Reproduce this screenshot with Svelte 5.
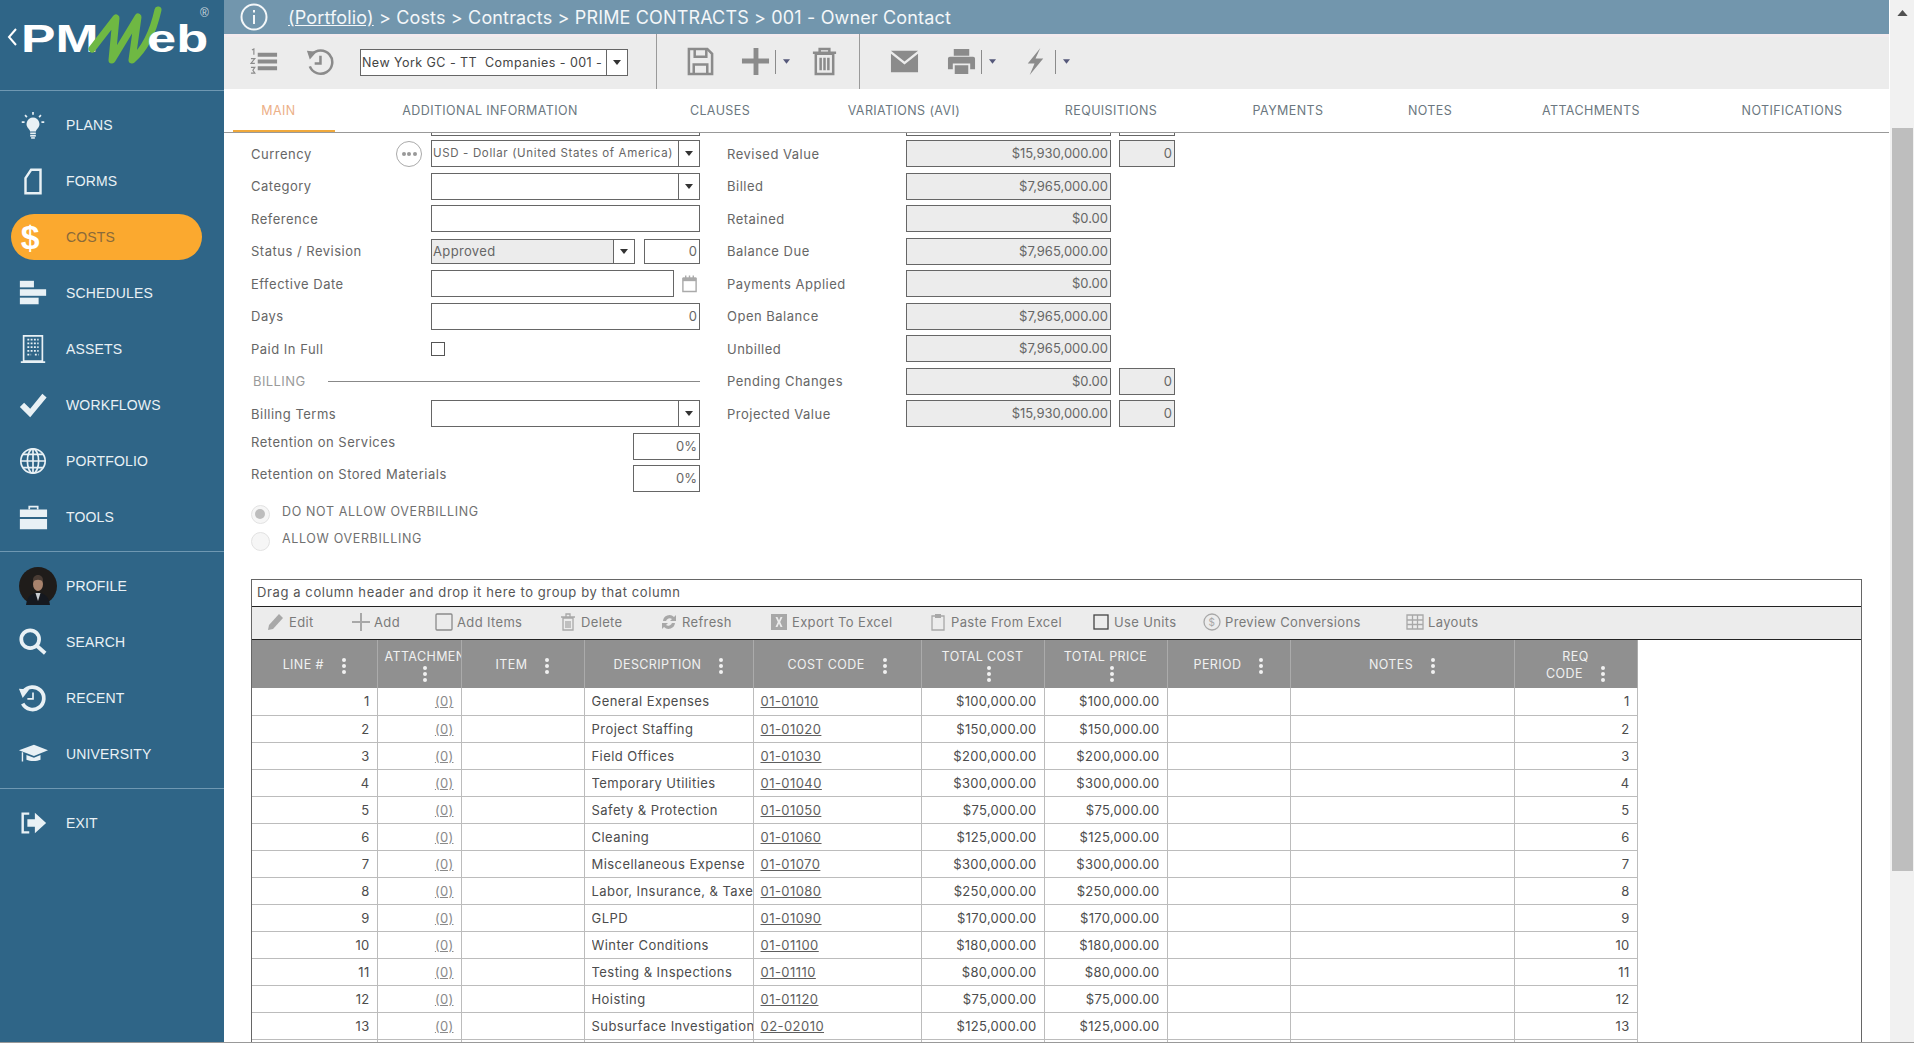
<script>
    const navTop = ['plans', 'forms', 'costs', 'schedules', 'assets', 'workflows', 'portfolio', 'tools'];
    const navMid = ['profile', 'search', 'recent', 'university'];

    // widths keep the uneven tab spacing of the real page
    const tabs = [
        { label: 'MAIN', w: 102 },
        { label: 'ADDITIONAL INFORMATION', w: 310 },
        { label: 'CLAUSES', w: 150 },
        { label: 'VARIATIONS (AVI)', w: 218 },
        { label: 'REQUISITIONS', w: 196 },
        { label: 'PAYMENTS', w: 158 },
        { label: 'NOTES', w: 126 },
        { label: 'ATTACHMENTS', w: 196 },
        { label: 'NOTIFICATIONS', w: 206 },
    ];

    const rightRows = [
        { label: 'Revised Value', value: '$15,930,000.00', extra: '0' },
        { label: 'Billed', value: '$7,965,000.00' },
        { label: 'Retained', value: '$0.00' },
        { label: 'Balance Due', value: '$7,965,000.00' },
        { label: 'Payments Applied', value: '$0.00' },
        { label: 'Open Balance', value: '$7,965,000.00' },
        { label: 'Unbilled', value: '$7,965,000.00' },
        { label: 'Pending Changes', value: '$0.00', extra: '0' },
        { label: 'Projected Value', value: '$15,930,000.00', extra: '0' },
    ];

    const gridTools = [
        { icon: 'edit', label: 'Edit', w: 85 },
        { icon: 'add', label: 'Add', w: 83 },
        { icon: 'box', label: 'Add Items', w: 124 },
        { icon: 'trash', label: 'Delete', w: 101 },
        { icon: 'refresh', label: 'Refresh', w: 110 },
        { icon: 'excel', label: 'Export To Excel', w: 159 },
        { icon: 'paste', label: 'Paste From Excel', w: 163 },
        { icon: 'unit', label: 'Use Units', w: 111 },
        { icon: 'coin', label: 'Preview Conversions', w: 203 },
        { icon: 'layouts', label: 'Layouts', w: 90 },
    ];

    const columns = [
        { label: 'LINE #', w: 125 },
        { label: 'ATTACHMENTS', w: 84, stack: true },
        { label: 'ITEM', w: 123 },
        { label: 'DESCRIPTION', w: 169 },
        { label: 'COST CODE', w: 168 },
        { label: 'TOTAL COST', w: 123, stack: true },
        { label: 'TOTAL PRICE', w: 123, stack: true },
        { label: 'PERIOD', w: 123 },
        { label: 'NOTES', w: 224 },
        { label: 'REQ CODE', w: 123, two: true },
    ];

    const lines = [
        ['General Expenses', '01-01010', '$100,000.00'],
        ['Project Staffing', '01-01020', '$150,000.00'],
        ['Field Offices', '01-01030', '$200,000.00'],
        ['Temporary Utilities', '01-01040', '$300,000.00'],
        ['Safety & Protection', '01-01050', '$75,000.00'],
        ['Cleaning', '01-01060', '$125,000.00'],
        ['Miscellaneous Expense', '01-01070', '$300,000.00'],
        ['Labor, Insurance, & Taxes', '01-01080', '$250,000.00'],
        ['GLPD', '01-01090', '$170,000.00'],
        ['Winter Conditions', '01-01100', '$180,000.00'],
        ['Testing & Inspections', '01-01110', '$80,000.00'],
        ['Hoisting', '01-01120', '$75,000.00'],
        ['Subsurface Investigations', '02-02010', '$125,000.00'],
    ];
</script>

{#snippet navIcon(name)}
    <svg class="nav-ico" viewBox="0 0 32 32">
        {#if name === 'plans'}
            <path d="M16 8a7 7 0 0 1 4.500 12.200c-1 1-1.300 1.800-1.400 2.800h-6.200c-.1-1-.4-1.800-1.400-2.800A7 7 0 0 1 16 8z" />
            <rect x="13" y="24" width="6" height="1.800" /><rect x="13" y="26.600" width="6" height="1.800" /><rect x="14" y="29" width="4" height="1.600" />
            <path class="line" d="M16 2v3M7.500 5.500l2 2M24.500 5.500l-2 2M4 13h3M25 13h3" />
        {:else if name === 'forms'}
            <path class="line thick" d="M8 13l6-9h10v25H8z" />
        {:else if name === 'costs'}
            <text class="dollar" x="13" y="29">$</text>
        {:else if name === 'schedules'}
            <rect x="2" y="3" width="15" height="7" /><rect x="2" y="12" width="28" height="7" /><rect x="2" y="21" width="20" height="7" />
        {:else if name === 'assets'}
            <path class="line" d="M6 2h20v27H6zM3 30h26" />
            <path class="dots" d="M10 6h12M10 10h12M10 14h12M10 18h12M10 22h4M18 22h4" />
        {:else if name === 'workflows'}
            <path d="M2 18l4.500-4.500L13 20 26 4l4.500 4L13 29z" />
        {:else if name === 'portfolio'}
            <circle class="line" cx="16" cy="16" r="13" />
            <ellipse class="line" cx="16" cy="16" rx="6" ry="13" />
            <path class="line" d="M16 3v26M3 16h26M5 9h22M5 23h22" />
        {:else if name === 'tools'}
            <path class="line" d="M12 8V5h9v3" />
            <path d="M2 8h29v8H2zM2 18h29v11H2z" />
        {:else if name === 'search'}
            <circle class="line heavy" cx="13" cy="13" r="9.500" />
            <path class="line heavy" d="M20 20l9 8" />
        {:else if name === 'recent'}
            <path class="line heavy" d="M6 9a12 12 0 1 1-1 13" />
            <path d="M1 6l11 1-7 9z" />
            <path class="line" d="M16 10v7h-6" />
        {:else if name === 'university'}
            <path d="M1 12l16-6 15 6-15 6z" />
            <path d="M9 17l8 3 7-3v5c-4 2-11 2-15 0zM4 14h1.500v10h-1.500z" />
        {:else if name === 'exit'}
            <path class="line thick" d="M12 6H5v20h7" />
            <path d="M10 12h8V5l12 11-12 11v-7h-8z" />
        {/if}
    </svg>
{/snippet}

{#snippet arrow()}
    <svg class="arrow" viewBox="0 0 8 5"><path d="M0 0h8L4 5z" /></svg>
{/snippet}

{#snippet combo(text, cls = '')}
    <div class="combo {cls}">
        <span class="combo-text">{text}</span>
        <span class="combo-btn">{@render arrow()}</span>
    </div>
{/snippet}

{#snippet barIcon(name)}
    <svg class="bar-ico" viewBox="0 0 30 30">
        {#if name === 'list'}
            <path d="M8 6h20v4H8zM8 13h20v4H8zM8 20h20v4H8z" />
            <path class="thin" d="M2 3l2-1v6M1 12h4l-4 5h4M1 21h4l-2 3 2 3H1" />
        {:else if name === 'history'}
            <path class="stroke" d="M7 8a12 12 0 1 1-2 12" />
            <path d="M2 4l10 1-7 8z" />
            <path class="stroke" d="M16 9v8h-6" />
        {:else if name === 'save'}
            <path class="stroke" d="M3 2h19l5 5v21H3z" />
            <path class="stroke" d="M9 2v8h12V2M8 28V18h14v10" />
        {:else if name === 'plus'}
            <path d="M13 1h5v11h11v5H18v12h-5V17H1v-5h12z" />
        {:else if name === 'trash'}
            <path class="stroke" d="M6 7h18v21H6zM3 6h24M10 6V2h10v4M11 11v13M15 11v13M19 11v13" />
        {:else if name === 'mail'}
            <path d="M1 4h28L15 15zM1 7l14 11L29 7v19H1z" />
        {:else if name === 'print'}
            <path d="M7 2h16v7H7zM3 10h24a2 2 0 0 1 2 2v11h-5v-6H6v6H1V12a2 2 0 0 1 2-2zM8 19h14v9H8z" />
        {:else if name === 'bolt'}
            <path d="M20 1L7 17h7l-5 12 14-17h-8z" />
        {/if}
    </svg>
{/snippet}

{#snippet toolIcon(name)}
    <svg class="tool-ico" viewBox="0 0 18 18">
        {#if name === 'edit'}
            <path d="M1 17l1-5L12 1l4 4L6 16z" />
        {:else if name === 'add'}
            <path d="M8 0h2v8h8v2h-8v8H8v-8H0V8h8z" />
        {:else if name === 'box'}
            <rect class="stroke box" x="1" y="1" width="16" height="16" rx="1" />
        {:else if name === 'unit'}
            <rect class="stroke unit" x="2" y="2" width="14" height="14" />
        {:else if name === 'trash'}
            <path class="stroke" d="M4 5h10v12H4zM2 4h14M7 4V1h4v3M7 8v7M9 8v7M11 8v7" />
        {:else if name === 'refresh'}
            <path d="M3 8a6.500 6.500 0 0 1 11-4l2-2v6h-6l2-2a4 4 0 0 0-6 2zM15 10a6.500 6.500 0 0 1-11 4l-2 2v-6h6l-2 2a4 4 0 0 0 6-2z" />
        {:else if name === 'excel'}
            <path d="M1 1h16v16H1zM5.500 4l2.300 5-2.300 5h2l1.500-3.400 1.500 3.400h2l-2.300-5 2.300-5h-2L9 7.400 7.500 4z" fill-rule="evenodd" />
        {:else if name === 'paste'}
            <path class="stroke" d="M3 3h12v14H3z" />
            <path d="M6 1h6v4H6z" />
        {:else if name === 'coin'}
            <circle class="stroke" cx="9" cy="9" r="8" />
            <text class="coin" x="9" y="13">$</text>
        {:else if name === 'layouts'}
            <path class="stroke" d="M1 2h16v14H1zM1 7h16M1 11.500h16M6.500 2v14M11.500 2v14" />
        {/if}
    </svg>
{/snippet}

<div class="page">
    <aside class="side">
        <div class="logo">
            <svg viewBox="0 0 224 90" class="logo-svg">
                <path class="logo-back" d="M16 29l-7 8 7 8" />
                <text class="logo-text" transform="translate(21 52) scale(1.36 1)">PM</text>
                <path class="logo-w" d="M92 49L116 18l-4 42 26-43-6 43c12-10 21-28 26-50" />
                <text class="logo-text" transform="translate(147 52) scale(1.38 1)">eb</text>
                <text class="logo-reg" x="200" y="17">®</text>
            </svg>
        </div>
        <nav class="group">
            {#each navTop as n}
                <div class="nav" class:active={n === 'costs'}>
                    {@render navIcon(n)}
                    <span>{n.toUpperCase()}</span>
                </div>
            {/each}
        </nav>
        <nav class="group">
            {#each navMid as n}
                <div class="nav">
                    {#if n === 'profile'}
                        <svg class="avatar" viewBox="0 0 38 38">
                            <circle cx="19" cy="19" r="19" fill="#1f1c1a" />
                            <path d="M7 38c1-9 6-12 12-12s11 3 12 12z" fill="#15181f" />
                            <path d="M16.500 26l2.500 8 2.500-8z" fill="#c9cdd2" />
                            <ellipse cx="19" cy="17" rx="5" ry="7" fill="#a8836d" />
                            <path d="M14 15c-.5-5 2-7 5-7s5.500 2 5 7c-2-3-8-3-10 0z" fill="#4a3c34" />
                        </svg>
                    {:else}
                        {@render navIcon(n)}
                    {/if}
                    <span>{n.toUpperCase()}</span>
                </div>
            {/each}
        </nav>
        <nav class="group last">
            <div class="nav">
                {@render navIcon('exit')}
                <span>EXIT</span>
            </div>
        </nav>
    </aside>

    <main class="main">
        <header class="title">
            <svg class="info" viewBox="0 0 28 28">
                <circle cx="14" cy="14" r="12.500" />
                <path d="M14 12v9M14 7v2.500" />
            </svg>
            <div class="crumbs"><u>(Portfolio)</u> &gt; Costs &gt; Contracts &gt; PRIME CONTRACTS &gt; 001 - Owner Contact</div>
        </header>

        <div class="toolbar">
            {@render barIcon('list')}
            <span class="sp26"></span>
            {@render barIcon('history')}
            <span class="sp26"></span>
            {@render combo('New York GC - TT  Companies - 001 - Owner Contact', 'record')}
            <span class="bar-sep"></span>
            {@render barIcon('save')}
            <span class="sp26"></span>
            {@render barIcon('plus')}
            <span class="pipe"></span>
            <svg class="mini" viewBox="0 0 8 5"><path d="M0 0h8L4 5z" /></svg>
            <span class="sp20"></span>
            {@render barIcon('trash')}
            <span class="bar-sep second"></span>
            {@render barIcon('mail')}
            <span class="sp28"></span>
            {@render barIcon('print')}
            <span class="pipe"></span>
            <svg class="mini" viewBox="0 0 8 5"><path d="M0 0h8L4 5z" /></svg>
            <span class="sp25"></span>
            {@render barIcon('bolt')}
            <span class="pipe"></span>
            <svg class="mini" viewBox="0 0 8 5"><path d="M0 0h8L4 5z" /></svg>
        </div>

        <div class="tabs">
            {#each tabs as t, i}
                <div class="tab" class:on={i === 0} style:width="{t.w}px">{t.label}</div>
            {/each}
        </div>

        <div class="body">
            <div class="form">
                <div class="col left">
                    <div class="stub"></div>
                    <div class="rows">
                        <div class="row">
                            <label>Currency</label>
                            <span class="more"><i></i><i></i><i></i></span>
                            {@render combo('USD - Dollar (United States of America)', 'tight')}
                        </div>
                        <div class="row"><label>Category</label>{@render combo('')}</div>
                        <div class="row"><label>Reference</label><div class="input"></div></div>
                        <div class="row">
                            <label>Status / Revision</label>
                            {@render combo('Approved', 'status')}
                            <div class="input num rev">0</div>
                        </div>
                        <div class="row">
                            <label>Effective Date</label>
                            <div class="input date"></div>
                            <svg class="cal" viewBox="0 0 18 18">
                                <path d="M2 3h14v14H2z" fill="none" stroke="#aaa" stroke-width="1.500" />
                                <path d="M2 2h14v4H2z" fill="#aaa" />
                                <path d="M5 0v4M9 0v4M13 0v4" stroke="#aaa" stroke-width="1.500" />
                            </svg>
                        </div>
                        <div class="row"><label>Days</label><div class="input num">0</div></div>
                        <div class="row"><label>Paid In Full</label><span class="check"></span></div>
                        <div class="row">
                            <span class="section">BILLING</span>
                            <span class="rule"></span>
                        </div>
                        <div class="row"><label>Billing Terms</label>{@render combo('')}</div>
                        <div class="row top">
                            <label class="grow">Retention on Services</label>
                            <div class="input num pct">0%</div>
                        </div>
                        <div class="row top">
                            <label class="grow">Retention on Stored Materials</label>
                            <div class="input num pct">0%</div>
                        </div>
                    </div>
                    <div class="radios">
                        <div class="radio"><span class="dot on"></span>DO NOT ALLOW OVERBILLING</div>
                        <div class="radio"><span class="dot"></span>ALLOW OVERBILLING</div>
                    </div>
                </div>
                <div class="col right">
                    <div class="stub-row"><div class="stub wide"></div><div class="stub small"></div></div>
                    <div class="rows">
                        {#each rightRows as r}
                            <div class="row">
                                <label>{r.label}</label>
                                <div class="input ro num amount">{r.value}</div>
                                {#if r.extra}<div class="input ro num small">{r.extra}</div>{/if}
                            </div>
                        {/each}
                    </div>
                </div>
            </div>

            <section class="grid">
                <div class="group-panel">Drag a column header and drop it here to group by that column</div>
                <div class="grid-tools">
                    {#each gridTools as t}
                        <div class="gt" style:width="{t.w}px">
                            {@render toolIcon(t.icon)}
                            <span>{t.label}</span>
                        </div>
                    {/each}
                </div>
                <table>
                    <colgroup>
                        {#each columns as c}<col style:width="{c.w}px" />{/each}
                    </colgroup>
                    <thead>
                        <tr>
                            {#each columns as c}
                                <th>
                                    {#if c.stack}
                                        <div class="clip">{c.label}</div>
                                        <span class="kebab under"><i></i><i></i><i></i></span>
                                    {:else if c.two}
                                        <div>REQ</div>
                                        <div>CODE<span class="kebab side-k"><i></i><i></i><i></i></span></div>
                                    {:else}
                                        {c.label}<span class="kebab side-k"><i></i><i></i><i></i></span>
                                    {/if}
                                </th>
                            {/each}
                        </tr>
                    </thead>
                    <tbody>
                        {#each lines as l, i}
                            <tr>
                                <td class="r">{i + 1}</td>
                                <td class="r"><u class="dim">(0)</u></td>
                                <td></td>
                                <td class="desc"><div class="clip">{l[0]}</div></td>
                                <td><u>{l[1]}</u></td>
                                <td class="r">{l[2]}</td>
                                <td class="r">{l[2]}</td>
                                <td></td>
                                <td></td>
                                <td class="r">{i + 1}</td>
                            </tr>
                        {/each}
                        <tr>
                            {#each columns as c}<td></td>{/each}
                        </tr>
                    </tbody>
                </table>
            </section>
        </div>
    </main>

    <div class="scrollbar">
        <svg class="up" viewBox="0 0 12 7"><path d="M0 7L6 0l6 7z" /></svg>
        <div class="thumb"></div>
    </div>
</div>

<style>
    :global(body) {
        margin: 0;
        background: #fff;
    }

    .page {
        display: flex;
        height: 1042px;
        overflow: hidden;
        border-bottom: 1px solid #999;
        font-family: Inter, "Open Sans", sans-serif;
        font-size: 13px;
        color: #666;
    }

    /* sidebar */
    .side {
        flex: 0 0 224px;
        background: #2f6587;
        display: flex;
        flex-direction: column;
        color: #e9f1f5;
    }
    .logo {
        height: 90px;
        border-bottom: 1px solid #6f98b2;
    }
    .logo-svg { display: block; width: 224px; height: 90px; }
    .logo-text {
        font-family: "Liberation Sans", Arial, sans-serif;
        font-weight: 700;
        font-size: 38px;
        fill: #fff;
    }
    .logo-w { fill: none; stroke: #6fb843; stroke-width: 7; stroke-linejoin: round; stroke-linecap: round; }
    .logo-back { fill: none; stroke: #fff; stroke-width: 2; }
    .logo-reg { font-family: "Liberation Sans", Arial, sans-serif; font-size: 12px; fill: #c9d6de; }

    .group {
        padding: 11px 0;
        border-bottom: 1px solid #6f98b2;
    }
    .group.last { border-bottom: 0; }

    .nav {
        display: flex;
        align-items: center;
        height: 46px;
        margin: 0 22px 10px 11px;
        padding-left: 8px;
        border-radius: 23px;
        font-family: "Liberation Sans", Arial, sans-serif;
        font-size: 14px;
        letter-spacing: 0.15px;
    }
    .nav:last-child { margin-bottom: 0; }
    .nav span { margin-left: 12px; white-space: nowrap; }
    .nav.active { background: #fba92f; color: #8a6a3a; }
    .nav-ico { flex: 0 0 30px; width: 30px; height: 30px; margin: 0 6px 0 -1px; fill: #e9f1f5; overflow: visible; }
    .nav.active .nav-ico { fill: #fff; }
    .nav-ico .line { fill: none; stroke: #e9f1f5; stroke-width: 1.800; }
    .nav-ico .thick { stroke-width: 2.600; }
    .nav-ico .heavy { stroke-width: 4; }
    .nav-ico .dots { fill: none; stroke: #e9f1f5; stroke-width: 2; stroke-dasharray: 2 1.500; }
    .dollar { font-family: "Liberation Sans", sans-serif; font-weight: 700; font-size: 36px; text-anchor: middle; fill: #fff; }
    .avatar { flex: 0 0 38px; width: 38px; height: 38px; margin-right: -3px; }

    .main {
        flex: 1;
        min-width: 0;
        display: flex;
        flex-direction: column;
    }

    /* title */
    .title {
        height: 34px;
        flex: none;
        background: #7296ad;
        color: #f4f7f9;
        display: flex;
        align-items: center;
        padding-left: 16px;
    }
    .info { width: 28px; height: 28px; fill: none; stroke: #f4f7f9; stroke-width: 2; }
    .crumbs {
        margin-left: 20px;
        font-size: 18px;
        letter-spacing: 0.15px;
        white-space: nowrap;
    }

    /* toolbar */
    .toolbar {
        height: 55px;
        flex: none;
        box-sizing: border-box;
        background: #ececec;
        border-top: 3px solid #f3ebee;
        display: flex;
        align-items: center;
        padding: 0 0 3px 26px;
    }
    .bar-ico { width: 29px; height: 29px; fill: #8b8b8b; flex: none; }
    .bar-ico .stroke { fill: none; stroke: #8b8b8b; stroke-width: 2.600; }
    .bar-ico .thin { fill: none; stroke: #8b8b8b; stroke-width: 1.200; }
    .sp20 { width: 20px; }
    .sp25 { width: 25px; }
    .sp26 { width: 26px; }
    .sp28 { width: 28px; }
    .bar-sep {
        align-self: stretch;
        width: 1px;
        background: #9a9a9a;
        margin: -3px 29px -3px 28px;
    }
    .bar-sep.second { margin-left: 20px; margin-right: 30px; }
    .pipe { width: 1px; height: 24px; background: #8b8b8b; margin: 0 7px 0 5px; }
    .mini { width: 7px; height: 5px; fill: #55587a; }

    /* shared field bits */
    .combo, .input {
        box-sizing: border-box;
        height: 27px;
        background: #fff;
        border: 1px solid #666;
    }
    .combo {
        display: flex;
        width: 269px;
        align-items: stretch;
    }
    .combo-text {
        flex: 1;
        min-width: 0;
        overflow: hidden;
        white-space: pre;
        line-height: 25px;
        padding-left: 1px;
        font-size: 12px;
        letter-spacing: 0.35px;
    }
    .combo-btn {
        flex: 0 0 20px;
        border-left: 1px solid #666;
        display: flex;
        align-items: center;
        justify-content: center;
    }
    .arrow { width: 8px; height: 5px; fill: #333; }
    .combo.record { width: 268px; flex: none; margin-top: 2px; }
    .combo.record .combo-text { color: #444; font-size: 12.500px; letter-spacing: 0.45px; }
    .combo.tight .combo-text { font-size: 11.500px; letter-spacing: 0.65px; }
    .combo.status { width: 204px; height: 25px; background: #ececec; }
    .combo.status .combo-text { line-height: 23px; font-size: 13px; }
    .combo.status .combo-btn { background: #fff; }

    .input { width: 269px; }
    .input.num {
        text-align: right;
        line-height: 25px;
        padding-right: 2px;
        white-space: nowrap;
    }
    .input.rev { width: 56px; margin-left: 9px; height: 25px; line-height: 23px; }
    .input.date { width: 243px; }
    .input.pct { width: 67px; }
    .input.ro { background: #ececec; }
    .input.amount { width: 205px; }
    .input.small { width: 56px; margin-left: 8px; }
    .cal { width: 17px; height: 18px; margin-left: 7px; }

    /* form */
    .body {
        flex: 1;
        min-height: 0;
        overflow: hidden;
        padding-left: 27px;
    }
    .form { display: flex; height: 446px; }
    .col.left { width: 449px; margin-right: 27px; }
    .stub {
        box-sizing: border-box;
        height: 3px;
        margin-left: 180px;
        width: 269px;
        border: 1px solid #666;
        border-top: 0;
    }
    .stub-row { display: flex; }
    .stub-row .stub.wide { margin-left: 179px; width: 205px; }
    .stub-row .stub.small { margin-left: 8px; width: 56px; }
    .rows {
        display: grid;
        grid-auto-rows: 27px;
        row-gap: 5.500px;
        margin-top: 4px;
    }
    .row {
        display: flex;
        align-items: center;
        white-space: nowrap;
    }
    label { flex: 0 0 180px; letter-spacing: 0.5px; }
    .col.right label { flex-basis: 179px; }
    .row.top { align-items: flex-start; }
    .row.top label { padding-top: 1px; }
    label.grow { flex: 1; }
    .more {
        position: absolute;
        margin-left: 145px;
        box-sizing: border-box;
        width: 26px;
        height: 26px;
        border: 1.500px solid #aaa;
        border-radius: 50%;
        display: flex;
        align-items: center;
        justify-content: center;
        gap: 1.500px;
    }
    .more i { width: 4px; height: 4px; background: #999; border-radius: 50%; }
    .check {
        box-sizing: border-box;
        width: 14px;
        height: 14px;
        border: 1px solid #555;
    }
    .section { color: #9a9a9a; letter-spacing: 0.4px; margin-left: 2px; width: 75px; }
    .rule { flex: 1; height: 1px; background: #888; }
    .radios { margin-top: 11px; }
    .radio {
        position: relative;
        height: 26.500px;
        line-height: 17px;
        padding-left: 31px;
        font-size: 12.500px;
        letter-spacing: 0.65px;
        color: #707070;
    }
    .dot {
        position: absolute;
        left: 0;
        top: 2px;
        box-sizing: border-box;
        width: 19px;
        height: 19px;
        border-radius: 50%;
        border: 1.500px solid #e2e2e2;
        background: #f6f6f6;
    }
    .dot.on::after {
        content: '';
        position: absolute;
        left: 3px;
        top: 3px;
        width: 10px;
        height: 10px;
        border-radius: 50%;
        background: #bdbdbd;
    }

    /* tabs */
    .tabs {
        height: 44px;
        flex: none;
        box-sizing: border-box;
        border-bottom: 1px solid #999;
        display: flex;
        padding-left: 9px;
        overflow: hidden;
    }
    .tab {
        flex: none;
        box-sizing: border-box;
        height: 44px;
        line-height: 43px;
        text-align: center;
        white-space: nowrap;
        font-size: 12.500px;
        letter-spacing: 0.4px;
        color: #6b7780;
    }
    .tab.on {
        color: #ecb088;
        padding-right: 11px;
        border-bottom: 3px solid #f0a93c;
    }

    /* grid */
    .grid {
        box-sizing: border-box;
        width: 1611px;
        height: 470px;
        border: 1px solid #666;
        border-bottom: 0;
        overflow: hidden;
    }
    .group-panel {
        box-sizing: border-box;
        height: 26px;
        line-height: 25px;
        padding-left: 5px;
        color: #555;
        letter-spacing: 0.6px;
    }
    .grid-tools {
        box-sizing: border-box;
        height: 34px;
        background: #ececec;
        border-top: 1px solid #222;
        border-bottom: 1px solid #222;
        display: flex;
        align-items: center;
        padding: 0 0 2px 15px;
        color: #7a7a7a;
        letter-spacing: 0.35px;
    }
    .gt { display: flex; align-items: center; flex: none; white-space: nowrap; }
    .gt span { margin-left: 4px; }
    .tool-ico { width: 18px; height: 18px; fill: #a8a8a8; flex: none; }
    .tool-ico .stroke { fill: none; stroke: #a8a8a8; stroke-width: 1.300; }
    .tool-ico .box { stroke: #8a8a8a; }
    .tool-ico .unit { stroke: #444; }
    .coin { font-size: 10px; text-anchor: middle; fill: #a8a8a8; }

    table {
        border-collapse: collapse;
        table-layout: fixed;
        width: 1385px;
    }
    th {
        height: 48px;
        box-sizing: border-box;
        padding: 2px 0 0;
        background: #909090;
        color: #f1f1f1;
        font-weight: 400;
        font-size: 12.500px;
        letter-spacing: 0.4px;
        line-height: 17px;
        border-right: 1px solid #ababab;
        white-space: nowrap;
        overflow: hidden;
    }
    th .clip { padding: 0 7px; }
    .clip { overflow: hidden; white-space: nowrap; }
    .kebab {
        display: inline-flex;
        flex-direction: column;
        gap: 2px;
        vertical-align: middle;
    }
    .kebab i { width: 4px; height: 4px; border-radius: 50%; background: #f1f1f1; }
    .side-k { margin-left: 18px; }
    .under { margin-left: 12px; }
    td {
        height: 27px;
        box-sizing: border-box;
        padding: 0 7px;
        border-right: 1px solid #bcbcbc;
        border-bottom: 1px solid #bcbcbc;
        color: #4c4c4c;
        white-space: nowrap;
        letter-spacing: 0.45px;
    }
    td.desc { padding-right: 0; }
    td.r { text-align: right; letter-spacing: 0.3px; }
    td u { color: #5e5e5e; }
    td u.dim { color: #8a8a8a; }

    /* page scrollbar */
    .scrollbar {
        flex: 0 0 25px;
        background: #f1f1f1;
        border-left: 1px solid #fff;
        box-sizing: border-box;
    }
    .up { display: block; width: 11px; height: 6px; margin: 10px auto 0; fill: #505050; }
    .thumb { height: 743px; margin: 112px 1px 0 2px; background: #bebebe; }
</style>
